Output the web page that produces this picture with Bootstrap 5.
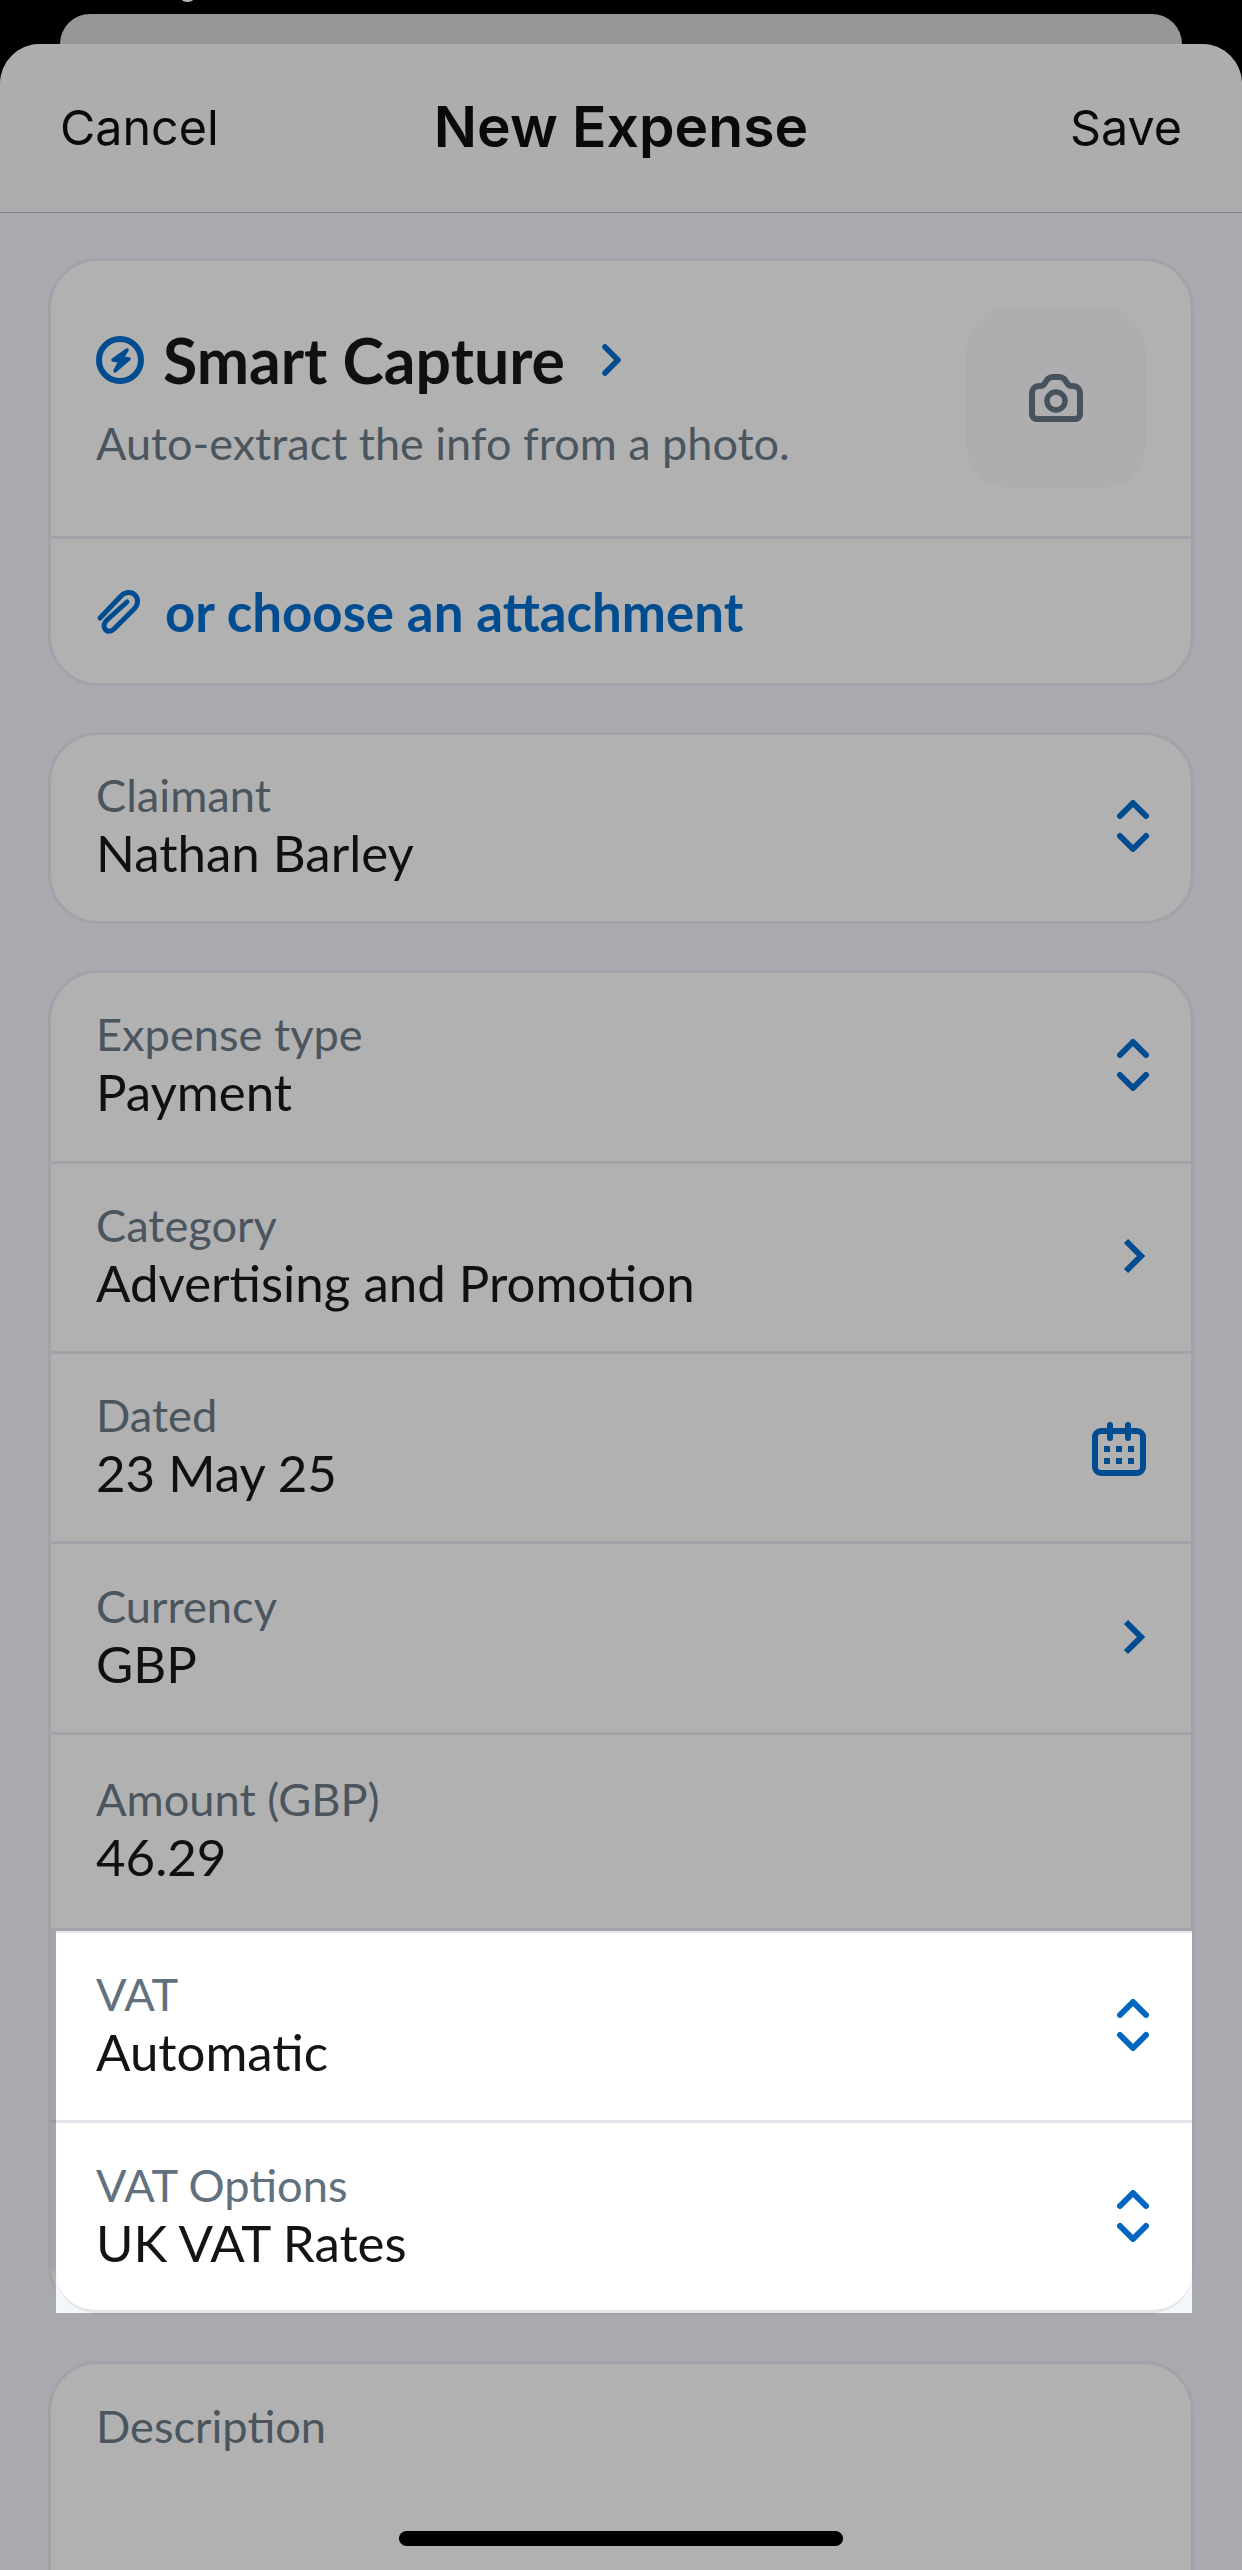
<!DOCTYPE html>
<html lang="en">
<head>
<meta charset="utf-8">
<title>New Expense</title>
<link rel="stylesheet" href="https://cdn.jsdelivr.net/npm/bootstrap@5.3.0/dist/css/bootstrap.min.css">
<style>
html, body { height: 100%; }
body { background: #000; overflow: hidden; font-family: Lato, "Liberation Sans", sans-serif; }
.stage { position: relative; height: 2570px; overflow: hidden; padding-top: 14px; }
.clocktip { position: absolute; left: 182px; top: -3px; width: 11px; height: 5px; border-radius: 50%; background: #b5b5b5; }
.backsheet { height: 60px; margin: 0 60px -30px; background: #979799; border-radius: 30px 30px 0 0; }
.sheet { position: relative; height: 2526px; background: #a9aab0; border-radius: 40px 40px 0 0; overflow: hidden; }
.sheethead { height: 169px; background: #adadaf; border-bottom: 1px solid #87878b; padding: 0 60px; }
.navside { flex: 1 1 0; }
.navlink { font-family: Inter, "Liberation Sans", sans-serif; font-size: 48.4px; color: #0a0a0a; }
.navtitle { font-family: Inter, "Liberation Sans", sans-serif; font-size: 57px; font-weight: 600; color: #0a0a0a; margin-bottom: 2px; }
.sections { padding: 45px 48px 0; display: flex; flex-direction: column; gap: 46px; }
.panel { --bs-card-bg: #b1b1b1; --bs-card-border-color: #a2a2a8; --bs-card-border-width: 3px; --bs-card-border-radius: 50px; --bs-card-inner-border-radius: 47px; }
.rowitem { height: 190px; padding: 0 42px 3px 45px; border-bottom: 3px solid #a2a2a8; }
.rowitem:last-child { border-bottom: 0; }
.rowsolo { height: 186px; padding-bottom: 4px; }
.rowshort { height: 191px; padding-bottom: 5px; }
.rowlong { height: 191px; }
.rowamount { height: 196px; }
.rowdesc { height: 400px; padding-top: 35px; }
.fieldlabel { font-size: 45.2px; line-height: 54px; color: #4b555e; }
.fieldvalue { font-size: 51px; line-height: 62px; color: #101010; }
.capture { height: 278px; padding: 0 45px 2px 45px; border-bottom: 3px solid #a2a2a8; }
.capturetitle { font-size: 62.5px; font-weight: 700; line-height: 70px; color: #101010; margin-left: 19px; }
.capturesub { font-size: 45px; line-height: 56px; color: #4b555e; margin-top: 20px; }
.capturechev { margin-left: 36px; }
.cameratile { width: 180px; height: 180px; border-radius: 42px; background: #aeaeb0; }
.attachrow { height: 144px; padding: 2px 45px 0 45px; }
.attachlink { font-size: 52.8px; font-weight: 700; color: #004c90; margin-left: 23px; }
.ic-blue { color: #004c90; }
.ic-dark { color: #46525c; }
.nudge { margin-right: 3px; }
.calnudge { margin-right: 3px; margin-top: 6px; }
.lit { position: relative; margin: 0 -1px -1px 5px; background: #f3f6fb; }
.lit::before { content: ""; position: absolute; left: -5px; top: 0; width: 5px; height: 340px; background: linear-gradient(#a5a6aa 0 189px, #9a9aa0 189px 192px, #a5a6aa 192px); }
.lit .rowitem { background: #fff; border-bottom-color: #e4e4ea; padding-left: 40px; padding-right: 43px; }
.lit .rowitem:first-child { height: 192px; border-top: 2px solid #e8e9ee; }
.lit .rowitem:last-child { border-bottom: 3px solid #e4e4ea; border-radius: 0 0 40px 40px; padding-bottom: 2px; }
.lit .fieldlabel { color: #61717d; }
.lit .fieldvalue { color: #141414; }
.lit .ic-blue { color: #0066bf; }
.homebar { position: absolute; left: 399px; bottom: 24px; width: 444px; height: 15px; background: #000; border-radius: 8px; }
</style>
</head>
<body>
<div class="stage">
  <div class="clocktip"></div>
  <div class="backsheet"></div>
  <div class="sheet">
    <div class="sheethead d-flex align-items-center">
      <span class="navside navlink">Cancel</span>
      <span class="navtitle">New Expense</span>
      <span class="navside navlink text-end">Save</span>
    </div>
    <div class="sections">
      <div class="card panel">
        <div class="capture d-flex align-items-center justify-content-between">
          <div>
            <div class="d-flex align-items-center">
              <svg class="ic-blue" width="48" height="48" viewBox="0 0 48 48"><circle cx="24" cy="24" r="21" fill="none" stroke="currentColor" stroke-width="6"/><path d="M31 14 17 24l7 1-5 10 14-12-7-1z" fill="currentColor" stroke="currentColor" stroke-width="3.5" stroke-linejoin="round"/></svg>
              <span class="capturetitle">Smart Capture</span>
              <svg class="ic-blue capturechev" width="22" height="32" viewBox="0 0 22 32"><path d="M4 3l13 13L4 29" fill="none" stroke="currentColor" stroke-width="5.5" stroke-linecap="round" stroke-linejoin="round"/></svg>
            </div>
            <div class="capturesub">Auto-extract the info from a photo.</div>
          </div>
          <div class="cameratile d-flex align-items-center justify-content-center">
            <svg class="ic-dark" width="54" height="48" viewBox="0 0 54 48"><path d="M3 19c0-4 3-7 7-7h2c2 0 3-1 4-3 2-4 4-6 8-6h6c4 0 6 2 8 6 1 2 2 3 4 3h2c4 0 7 3 7 7v21c0 3-2 5-5 5H8c-3 0-5-2-5-5z" fill="none" stroke="currentColor" stroke-width="6"/><circle cx="27" cy="27" r="9" fill="none" stroke="currentColor" stroke-width="5.5"/></svg>
          </div>
        </div>
        <div class="attachrow d-flex align-items-center">
          <svg class="ic-blue" width="46" height="46" viewBox="0 0 46 46"><path d="M4 29 25 7c4-4 10-5 14-1s3 10-1 14L18 40c-3 3-7 3-9 0s-1-6 2-9L31 13" fill="none" stroke="currentColor" stroke-width="5" stroke-linecap="round"/></svg>
          <span class="attachlink">or choose an attachment</span>
        </div>
      </div>

      <div class="card panel">
        <div class="rowitem rowsolo d-flex align-items-center justify-content-between">
          <div><div class="fieldlabel">Claimant</div><div class="fieldvalue">Nathan Barley</div></div>
          <svg class="ic-blue" width="32" height="52" viewBox="0 0 32 52"><path d="M3 16 16 3l13 13M3 36l13 13 13-13" fill="none" stroke="currentColor" stroke-width="6" stroke-linecap="round" stroke-linejoin="round"/></svg>
        </div>
      </div>

      <div class="card panel">
        <div class="rowitem rowshort d-flex align-items-center justify-content-between">
          <div><div class="fieldlabel">Expense type</div><div class="fieldvalue">Payment</div></div>
          <svg class="ic-blue" width="32" height="52" viewBox="0 0 32 52"><path d="M3 16 16 3l13 13M3 36l13 13 13-13" fill="none" stroke="currentColor" stroke-width="6" stroke-linecap="round" stroke-linejoin="round"/></svg>
        </div>
        <div class="rowitem d-flex align-items-center justify-content-between">
          <div><div class="fieldlabel">Category</div><div class="fieldvalue">Advertising and Promotion</div></div>
          <svg class="ic-blue nudge" width="24" height="36" viewBox="0 0 24 36"><path d="M4 3l15 15L4 33" fill="none" stroke="currentColor" stroke-width="6"/></svg>
        </div>
        <div class="rowitem d-flex align-items-center justify-content-between">
          <div><div class="fieldlabel">Dated</div><div class="fieldvalue">23 May 25</div></div>
          <svg class="ic-blue calnudge" width="54" height="54" viewBox="0 0 54 54"><rect x="3" y="9" width="48" height="42" rx="6" fill="none" stroke="currentColor" stroke-width="6"/><path d="M18 3v13M36 3v13" stroke="currentColor" stroke-width="6" stroke-linecap="round"/><path d="M12 24h6v6h-6zm12 0h6v6h-6zm12 0h6v6h-6zM12 36h6v6h-6zm12 0h6v6h-6zm12 0h6v6h-6z" fill="currentColor"/></svg>
        </div>
        <div class="rowitem rowlong d-flex align-items-center justify-content-between">
          <div><div class="fieldlabel">Currency</div><div class="fieldvalue">GBP</div></div>
          <svg class="ic-blue nudge" width="24" height="36" viewBox="0 0 24 36"><path d="M4 3l15 15L4 33" fill="none" stroke="currentColor" stroke-width="6"/></svg>
        </div>
        <div class="rowitem rowamount d-flex align-items-center justify-content-between">
          <div><div class="fieldlabel">Amount (GBP)</div><div class="fieldvalue">46.29</div></div>
        </div>
        <div class="lit">
          <div class="rowitem d-flex align-items-center justify-content-between">
            <div><div class="fieldlabel">VAT</div><div class="fieldvalue">Automatic</div></div>
            <svg class="ic-blue" width="32" height="52" viewBox="0 0 32 52"><path d="M3 16 16 3l13 13M3 36l13 13 13-13" fill="none" stroke="currentColor" stroke-width="6" stroke-linecap="round" stroke-linejoin="round"/></svg>
          </div>
          <div class="rowitem d-flex align-items-center justify-content-between">
            <div><div class="fieldlabel">VAT Options</div><div class="fieldvalue">UK VAT Rates</div></div>
            <svg class="ic-blue" width="32" height="52" viewBox="0 0 32 52"><path d="M3 16 16 3l13 13M3 36l13 13 13-13" fill="none" stroke="currentColor" stroke-width="6" stroke-linecap="round" stroke-linejoin="round"/></svg>
          </div>
        </div>
      </div>

      <div class="card panel">
        <div class="rowitem rowdesc"><div class="fieldlabel">Description</div></div>
      </div>
    </div>
    <div class="homebar"></div>
  </div>
</div>
<script src="https://cdn.jsdelivr.net/npm/bootstrap@5.3.0/dist/js/bootstrap.bundle.min.js"></script>
</body>
</html>
